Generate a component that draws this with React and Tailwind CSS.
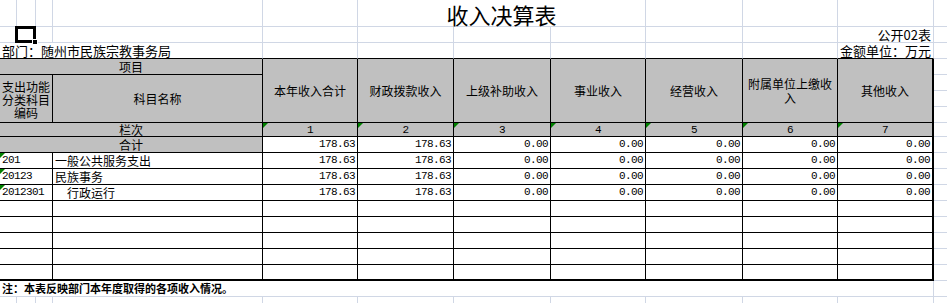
import React from "react";

const light = "border-r border-b border-[#d0d7e5]";
const lightBottom = "border-b border-[#d0d7e5]";
const topEdge = "border-r border-r-[#d0d7e5] border-b border-b-black";
const dark = "border-r border-b border-black";
const darkEnd = "border-r-2 border-b border-black";
const head = "border-r border-b border-black bg-[#c0c0c0]";
const headEnd = "border-r-2 border-b border-black bg-[#c0c0c0]";
const num = "font-['Liberation_Mono','Noto_Sans_CJK_SC',monospace] text-[11px] tracking-[-0.6px]";

const columns = ["本年收入合计", "财政拨款收入", "上级补助收入", "事业收入", "经营收入", "附属单位上缴收入", "其他收入"];

const rows = [
  { code: "201", name: "一般公共服务支出", values: ["178.63", "178.63", "0.00", "0.00", "0.00", "0.00", "0.00"] },
  { code: "20123", name: "民族事务", values: ["178.63", "178.63", "0.00", "0.00", "0.00", "0.00", "0.00"] },
  { code: "2012301", name: "　行政运行", values: ["178.63", "178.63", "0.00", "0.00", "0.00", "0.00", "0.00"] }
];

const totals = ["178.63", "178.63", "0.00", "0.00", "0.00", "0.00", "0.00"];

const Flag = () => (
  <span className="absolute left-0 top-0 h-0 w-0 border-t-[5px] border-r-[5px] border-t-[#008000] border-r-transparent" />
);

const ValueCells = ({ values, last = false }) =>
  values.map((value, i) => {
    const edge = i === values.length - 1;
    let cls = edge ? darkEnd : dark;
    if (last) cls = edge ? "border-r-2 border-b-2 border-black" : "border-r border-b-2 border-black";
    return (
      <div key={i} className={`${cls} flex items-center justify-end overflow-hidden pr-[2px] ${num}`}>
        {value}
      </div>
    );
  });

const BlankRow = ({ last = false }) => {
  const b = last ? "border-r border-b-2 border-black" : dark;
  return (
    <>
      <div className={`col-span-3 ${b}`} />
      <div className={b} />
      <ValueCells values={["", "", "", "", "", "", ""]} last={last} />
      <div className={lightBottom} />
    </>
  );
};

const App = () => {
  return (
    <div className="relative grid h-[303px] w-[947px] grid-cols-[17px_19px_17px_210px_95px_96px_97px_95px_97px_95px_96px_13px] grid-rows-[27px_repeat(6,16px)_14px_repeat(10,16px)_6px] overflow-hidden bg-white font-['Noto_Sans_CJK_SC','Liberation_Sans',sans-serif] text-[12px] leading-none text-black">
      {/* row 1 */}
      <div className={light} />
      <div className={light} />
      <div className={light} />
      <div className={light} />
      <div className={light} />
      <div className={`col-span-3 ${light} flex items-center justify-center pt-[1px] text-[22px] leading-[24px]`}>收入决算表</div>
      <div className={light} />
      <div className={light} />
      <div className={light} />
      <div className={lightBottom} />

      {/* row 2 */}
      <div className={light} />
      <div className={`${light} relative z-10`}>
        <span className="absolute -left-[2px] -top-[1px] h-[17px] w-[21px] border-[3px] border-black" />
        <span className="absolute left-[15px] top-[12px] h-[6px] w-[6px] border border-white bg-black" />
      </div>
      <div className={light} />
      <div className={light} />
      <div className={light} />
      <div className={light} />
      <div className={light} />
      <div className={light} />
      <div className={light} />
      <div className={light} />
      <div className={`${light} flex items-end justify-end pb-[1px] pr-[2px] text-[13px]`}>公开02表</div>
      <div className={lightBottom} />

      {/* row 3 */}
      <div className={`col-span-4 ${topEdge} flex items-end whitespace-nowrap pb-[1px] pl-[2px] text-[13px]`}>
        部门：随州市民族宗教事务局
      </div>
      <div className={topEdge} />
      <div className={topEdge} />
      <div className={topEdge} />
      <div className={topEdge} />
      <div className={topEdge} />
      <div className={topEdge} />
      <div className={`${topEdge} flex items-end justify-end whitespace-nowrap pb-[1px] pr-[2px] text-[13px]`}>
        金额单位：万元
      </div>
      <div className={lightBottom} />

      {/* header */}
      <div className={`col-span-4 ${head} flex items-center justify-center`}>项目</div>
      {columns.map((label, i) => (
        <div
          key={label}
          className={`row-span-4 ${i === columns.length - 1 ? headEnd : head} flex items-center justify-center text-center leading-[14px]`}
        >
          {label}
        </div>
      ))}
      <div className={lightBottom} />
      <div className={`col-span-3 row-span-3 ${head} flex items-center justify-center pt-[2px] text-center leading-[13px]`}>
        支出功能分类科目编码
      </div>
      <div className={`row-span-3 ${head} flex items-center justify-center`}>科目名称</div>
      <div className={lightBottom} />
      <div className={lightBottom} />
      <div className={lightBottom} />

      {/* 栏次 */}
      <div className={`col-span-4 ${head} flex items-end justify-center`}>栏次</div>
      {[1, 2, 3, 4, 5, 6, 7].map((n) => (
        <div key={n} className={`relative ${n === 7 ? headEnd : head} flex items-end justify-center ${num}`}>
          <Flag />
          {n}
        </div>
      ))}
      <div className={lightBottom} />

      {/* 合计 */}
      <div className={`col-span-4 ${head} flex items-center justify-center`}>合计</div>
      <ValueCells values={totals} />
      <div className={lightBottom} />

      {rows.map((row) => (
        <React.Fragment key={row.code}>
          <div className={`relative col-span-3 ${dark} flex items-center overflow-hidden pl-[2px] ${num}`}>
            <Flag />
            {row.code}
          </div>
          <div className={`${dark} flex items-center whitespace-pre pl-[2px]`}>{row.name}</div>
          <ValueCells values={row.values} />
          <div className={lightBottom} />
        </React.Fragment>
      ))}

      <BlankRow />
      <BlankRow />
      <BlankRow />
      <BlankRow />
      <BlankRow last />

      {/* note */}
      <div className={`col-span-11 ${light} flex items-center pl-[2px] text-[11px] font-bold`}>
        注：本表反映部门本年度取得的各项收入情况。
      </div>
      <div className={lightBottom} />

      {/* trailing grid */}
      {Array.from({ length: 11 }).map((_, i) => (
        <div key={i} className="border-r border-[#d0d7e5]" />
      ))}
      <div />
    </div>
  );
};

export default App;
